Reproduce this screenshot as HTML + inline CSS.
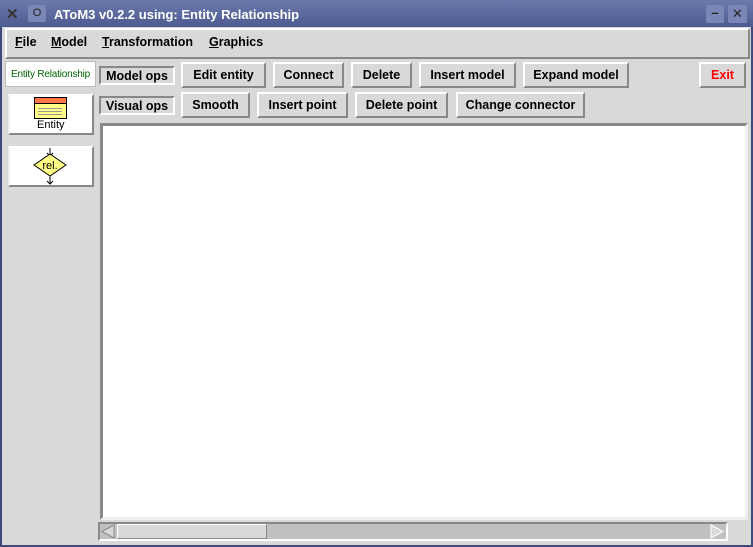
<!DOCTYPE html><html><head><style>
body{margin:0;width:753px;height:547px;overflow:hidden;background:#d9d9d9;font-family:"Liberation Sans",sans-serif;position:relative}
div{position:absolute;box-sizing:border-box}
.b{background:#d9d9d9;border:2px solid;border-color:#fff #888 #888 #fff;font-weight:bold;font-size:12.5px;display:flex;align-items:center;justify-content:center;color:#000;white-space:nowrap}
.s{border:2px solid;border-color:#888 #fff #fff #888}
.m{font-size:12.5px;font-weight:bold;top:35px}
u{text-decoration:underline}
</style></head><body>
<div style="left:0;top:0;width:753px;height:27px;background:linear-gradient(#6b79ad,#4d5b92);"></div>
<div style="left:0;top:27px;width:2px;height:520px;background:#3d4a7a"></div>
<div style="left:751px;top:27px;width:2px;height:520px;background:#3d4a7a"></div>
<div style="left:0;top:545px;width:753px;height:2px;background:#3d4a7a"></div>
<div style="left:6px;top:5px;font-size:15px;color:#333;font-weight:bold">✕</div>
<div style="left:28px;top:5px;width:18px;height:17px;background:#7a86b5;border-radius:2px;color:#222;font-size:11px;text-align:center;line-height:17px">O</div>
<div style="left:54px;top:7px;color:#fff;font-weight:bold;font-size:13px">AToM3 v0.2.2 using: Entity Relationship</div>
<div style="left:706px;top:5px;width:18px;height:18px;background:#7a86b5;border-radius:2px;color:#222;text-align:center;font-size:13px;line-height:16px;font-weight:bold">–</div>
<div style="left:728px;top:5px;width:19px;height:18px;background:#7a86b5;border-radius:2px;color:#222;text-align:center;font-size:13px;line-height:18px">✕</div>
<div class="b" style="left:5px;top:28px;width:745px;height:31px"></div>
<div class="m" style="left:15px"><u>F</u>ile</div>
<div class="m" style="left:51px"><u>M</u>odel</div>
<div class="m" style="left:102px"><u>T</u>ransformation</div>
<div class="m" style="left:209px"><u>G</u>raphics</div>
<div style="left:5px;top:61px;width:91px;height:26px;background:#fff;border:1px solid #bbb;color:#006400;font-size:10px;display:flex;align-items:center;justify-content:center;white-space:nowrap;letter-spacing:-0.2px">Entity Relationship</div>
<div class="b s" style="left:99px;top:66px;width:76px;height:19px">Model ops</div>
<div class="b" style="left:181px;top:62px;width:85px;height:26px">Edit entity</div>
<div class="b" style="left:273px;top:62px;width:71px;height:26px">Connect</div>
<div class="b" style="left:351px;top:62px;width:61px;height:26px">Delete</div>
<div class="b" style="left:419px;top:62px;width:97px;height:26px">Insert model</div>
<div class="b" style="left:523px;top:62px;width:106px;height:26px">Expand model</div>
<div class="b" style="left:699px;top:62px;width:47px;height:26px;color:#f00">Exit</div>
<div class="b s" style="left:99px;top:96px;width:76px;height:19px">Visual ops</div>
<div class="b" style="left:181px;top:92px;width:69px;height:26px">Smooth</div>
<div class="b" style="left:257px;top:92px;width:91px;height:26px">Insert point</div>
<div class="b" style="left:355px;top:92px;width:93px;height:26px">Delete point</div>
<div class="b" style="left:456px;top:92px;width:129px;height:26px">Change connector</div>
<div style="left:8px;top:94px;width:86px;height:41px;background:#fff;border:2px solid;border-color:#fff #888 #888 #eee"></div>
<div style="left:34px;top:97px;width:33px;height:22px;border:1px solid #000;background:#ffff88"></div>
<div style="left:35px;top:98px;width:31px;height:6px;background:#ff7744;border-bottom:1px solid #000"></div>
<div style="left:38px;top:108px;width:24px;height:1px;background:#999"></div>
<div style="left:38px;top:111px;width:24px;height:1px;background:#999"></div>
<div style="left:38px;top:114px;width:24px;height:1px;background:#999"></div>
<div style="left:37px;top:119px;font-size:11px">Entity</div>
<div style="left:8px;top:146px;width:86px;height:41px;background:#fff;border:2px solid;border-color:#fff #888 #888 #eee"></div>
<svg style="position:absolute;left:30px;top:146px" width="40" height="40"><path d="M20 2V10M17 7L20 10 23 7M20 30V38M17 35L20 38 23 35" stroke="#000" fill="none"/><polygon points="20,8 36,19 20,30 4,19" fill="#ffff88" stroke="#000"/><text x="20" y="23" font-size="11" text-anchor="middle" font-family="Liberation Sans">rel.</text></svg>
<div style="left:100px;top:123px;width:648px;height:397px;border:3px solid;border-color:#888 #eee #eee #888;background:#fff"></div>
<div style="left:98px;top:522px;width:630px;height:19px;background:#c0c0c0;border:2px solid;border-color:#888 #fff #fff #888"></div>
<div style="left:117px;top:524px;width:150px;height:15px;background:#d9d9d9;border:1px solid;border-color:#fff #888 #888 #fff"></div>
<svg style="position:absolute;left:100px;top:524px" width="626" height="15"><path d="M14 1L2 7.5 14 14Z" fill="#d9d9d9" stroke="#888"/><path d="M611 1L623 7.5 611 14Z" fill="#d9d9d9" stroke="#fff"/></svg>
</body></html>
